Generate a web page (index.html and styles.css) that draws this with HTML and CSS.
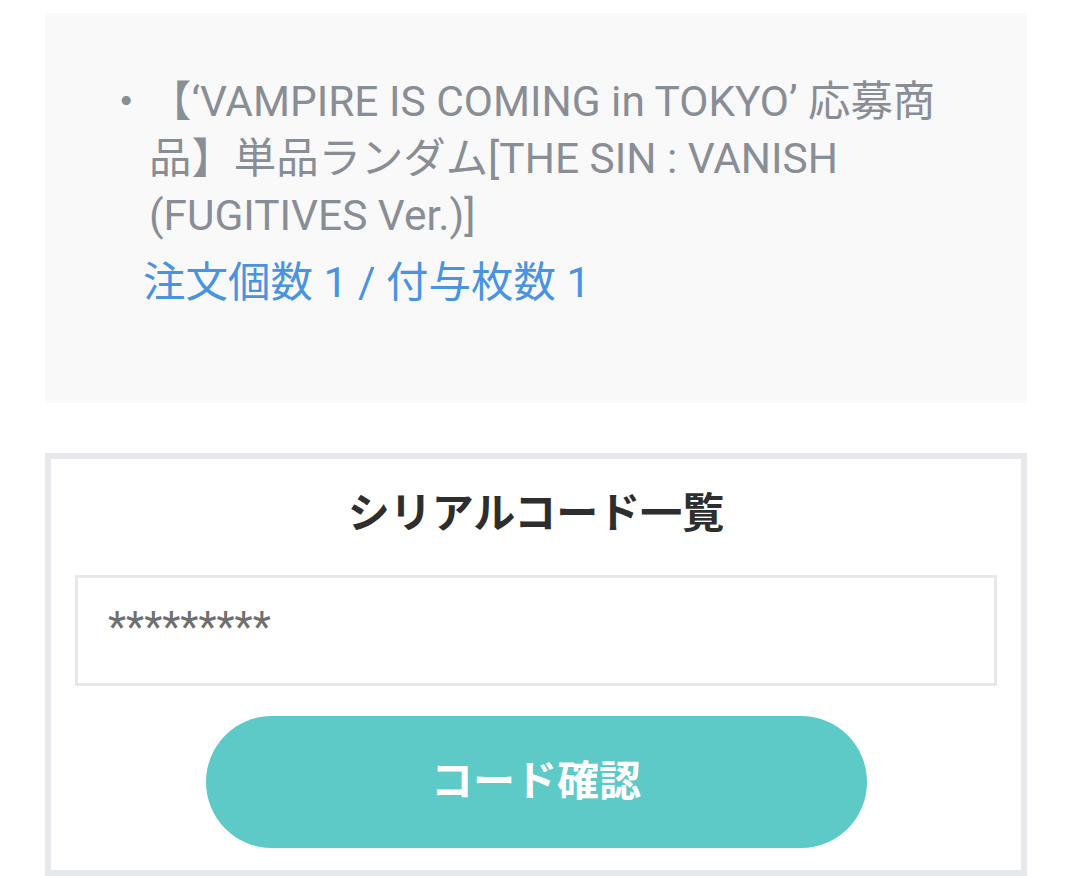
FILE: index.html
```html
<!DOCTYPE html>
<html lang="ja">
<head>
<meta charset="utf-8">
<title>シリアルコード一覧</title>
<link rel="stylesheet" href="styles.css">
</head>
<body>
<div class="page">
  <section class="summary">
    <ul class="items">
      <li class="item"><span class="dot">・</span><span class="name">【‘VAMPIRE IS COMING in TOKYO’ 応募商品】単品ランダム[THE SIN : VANISH (FUGITIVES Ver.)]</span></li>
    </ul>
    <p class="qty">注文個数 1 / 付与枚数 1</p>
  </section>
  <section class="serial">
    <h2 class="serial-title">シリアルコード一覧</h2>
    <div class="code">*********</div>
    <div class="actions"><button class="confirm" type="button">コード確認</button></div>
  </section>
</div>
</body>
</html>
```

FILE: styles.css
```css
html, body {
  margin: 0;
  padding: 0;
  background: #ffffff;
}

body {
  font-family: Roboto, "Noto Sans CJK JP", sans-serif;
  width: 1072px;
  height: 876px;
  overflow: hidden;
}

.page {
  padding: 13px 45px 0;
  display: flex;
  flex-direction: column;
  gap: 50px;
}

.summary {
  background: #f9f9fa;
  height: 390px;
  box-sizing: border-box;
  padding: 60px 60px 0 60px;
}

.items {
  list-style: none;
  margin: 0;
  padding: 0;
}

.item {
  display: flex;
  font-size: 42.4px;
  line-height: 57px;
  color: #898e96;
}

.dot {
  flex: 0 0 44px;
  width: 44px;
}

.name {
  flex: 1;
}

.qty {
  margin: 10px 0 0 38px;
  font-size: 42.5px;
  line-height: 57px;
  color: #4a93e2;
}

.serial {
  border: 6px solid #e6e8eb;
  height: 423px;
  box-sizing: border-box;
  padding: 0 24px;
  display: flex;
  flex-direction: column;
}

.serial-title {
  margin: 25px 0 0;
  text-align: center;
  font-size: 42px;
  line-height: 60px;
  font-weight: 700;
  color: #2e2e2e;
}

.code {
  margin-top: 31px;
  height: 111px;
  box-sizing: border-box;
  border: 3px solid #e6e8eb;
  padding: 0 30px 8px;
  display: flex;
  align-items: center;
  font-size: 42px;
  color: #6f6f6f;
}

.actions {
  display: flex;
  justify-content: center;
  margin-top: 30px;
}

.confirm {
  width: 661px;
  height: 132px;
  border: none;
  border-radius: 66px;
  background: #5ecac7;
  color: #ffffff;
  font-family: Roboto, "Noto Sans CJK JP", sans-serif;
  font-size: 42px;
  font-weight: 700;
  padding: 0 0 10px;
  cursor: pointer;
}
```
